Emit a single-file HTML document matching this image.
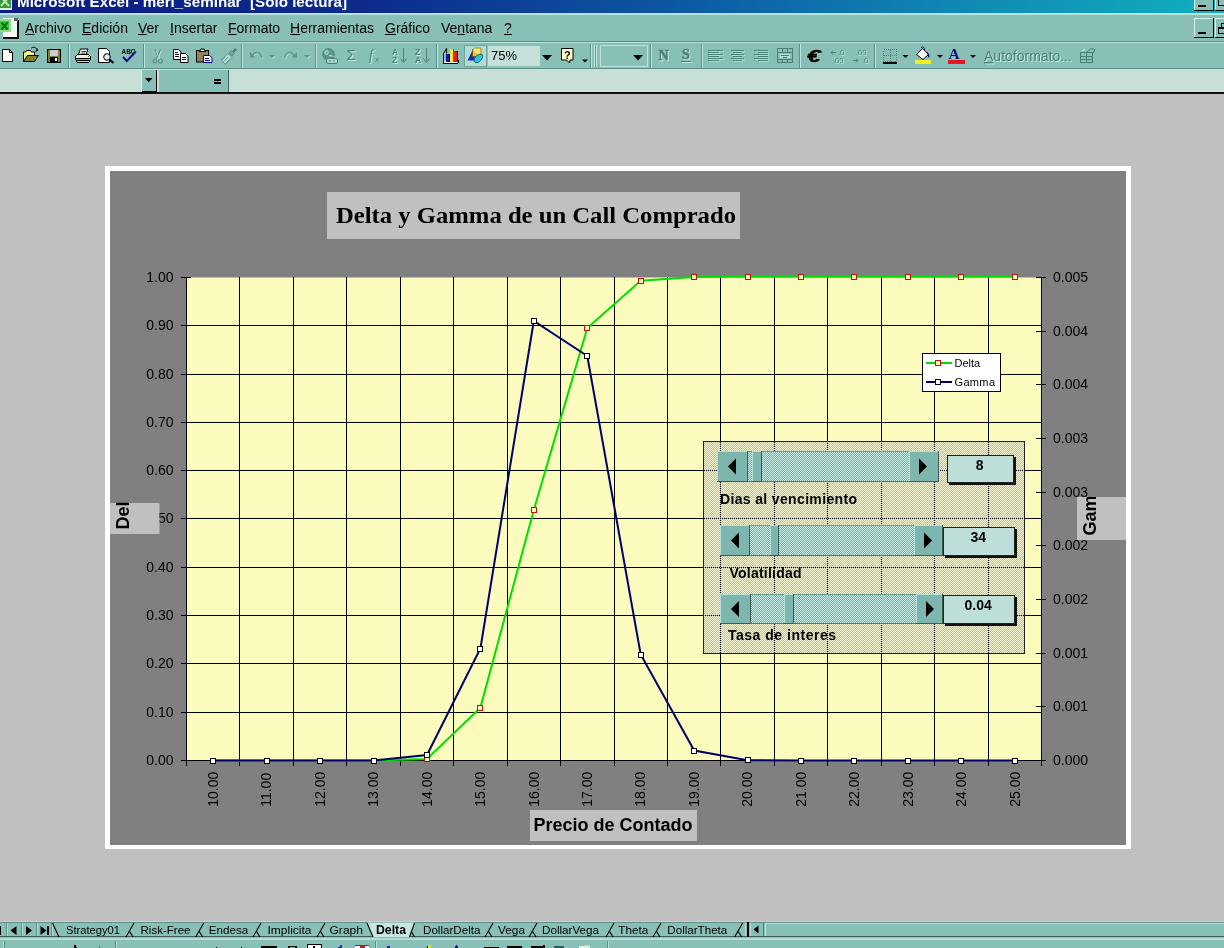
<!DOCTYPE html>
<html lang="es"><head><meta charset="utf-8"><title>Microsoft Excel - merl_seminar [Sólo lectura]</title>
<style>
html,body{margin:0;padding:0}
body{width:1224px;height:948px;overflow:hidden;position:relative;background:#C0C0C0;font-family:"Liberation Sans",sans-serif;color:#000}
.abs{position:absolute}
svg,.menu{will-change:transform}
#titlebar{left:0;top:0;width:1224px;height:13px;background:linear-gradient(to right,#0c1c84 0%,#0c2c8c 30%,#0c58a4 55%,#1088b4 78%,#10b0c0 100%);overflow:hidden}
#titletext{left:17px;top:-11px;font-size:16px;font-weight:bold;color:#fff;white-space:nowrap;letter-spacing:0.55px}
#menubar{left:0;top:13px;width:1224px;height:29px;background:#88C0B8;border-top:2px solid #B8E4DC;box-sizing:border-box;border-bottom:1px solid #5E9088}
.menu{position:absolute;top:20px;font-size:14px;line-height:16px;white-space:nowrap;color:#000}
.menu u{text-decoration:underline;text-underline-offset:1px}
#toolbar{left:0;top:42px;width:1224px;height:27px;background:#88C0B8;border-top:1px solid #B8E4DC;border-bottom:1px solid #5E9088;box-sizing:border-box}
#formulabar{left:0;top:69px;width:1224px;height:23px;background:#C8DFD7}
#fline{left:0;top:92px;width:1224px;height:2px;background:#101010}
.sep{position:absolute;top:45px;width:2px;height:22px;border-left:1px solid #5E9088;border-right:1px solid #B8E4DC;box-sizing:border-box}
.tab{position:absolute;top:923px;font-size:11.5px;line-height:14px;white-space:nowrap}
</style></head><body>

<div id="titlebar" class="abs"></div>
<div id="menubar" class="abs"></div>
<div class="menu" style="left:25px"><u>A</u>rchivo</div>
<div class="menu" style="left:82px"><u>E</u>dición</div>
<div class="menu" style="left:138px"><u>V</u>er</div>
<div class="menu" style="left:170px"><u>I</u>nsertar</div>
<div class="menu" style="left:228px"><u>F</u>ormato</div>
<div class="menu" style="left:290px"><u>H</u>erramientas</div>
<div class="menu" style="left:385px"><u>G</u>ráfico</div>
<div class="menu" style="left:441px">Ve<u>n</u>tana</div>
<div class="menu" style="left:504px"><u>?</u></div>
<div id="toolbar" class="abs"></div>
<div id="formulabar" class="abs"></div>
<div id="fline" class="abs"></div>
<svg class="abs" style="left:0;top:0" width="1224" height="94" viewBox="0 0 1224 94" font-family="Liberation Sans, sans-serif">
<text x="17" y="6.500" font-size="15.200" font-weight="bold" fill="#fff" xml:space="preserve">Microsoft Excel - merl_seminar  [Sólo lectura]</text>
<g shape-rendering="crispEdges">
<rect x="68" y="44" width="1" height="24" fill="#5E9088"/><rect x="69" y="44" width="1" height="24" fill="#BCE6DE"/>
<rect x="143" y="44" width="1" height="24" fill="#5E9088"/><rect x="144" y="44" width="1" height="24" fill="#BCE6DE"/>
<rect x="241" y="44" width="1" height="24" fill="#5E9088"/><rect x="242" y="44" width="1" height="24" fill="#BCE6DE"/>
<rect x="315" y="44" width="1" height="24" fill="#5E9088"/><rect x="316" y="44" width="1" height="24" fill="#BCE6DE"/>
<rect x="436" y="44" width="1" height="24" fill="#5E9088"/><rect x="437" y="44" width="1" height="24" fill="#BCE6DE"/>
<rect x="590" y="44" width="1" height="24" fill="#5E9088"/><rect x="591" y="44" width="1" height="24" fill="#BCE6DE"/>
<rect x="650" y="44" width="1" height="24" fill="#5E9088"/><rect x="651" y="44" width="1" height="24" fill="#BCE6DE"/>
<rect x="701" y="44" width="1" height="24" fill="#5E9088"/><rect x="702" y="44" width="1" height="24" fill="#BCE6DE"/>
<rect x="799" y="44" width="1" height="24" fill="#5E9088"/><rect x="800" y="44" width="1" height="24" fill="#BCE6DE"/>
<rect x="874" y="44" width="1" height="24" fill="#5E9088"/><rect x="875" y="44" width="1" height="24" fill="#BCE6DE"/>
<rect x="594" y="45" width="1" height="22" fill="#BCE6DE"/><rect x="595" y="46" width="1" height="21" fill="#6A9C94"/>
<rect x="596" y="45" width="1" height="22" fill="#BCE6DE"/>
</g>
<g shape-rendering="crispEdges"><rect x="3" y="18" width="15" height="20" fill="#F4F8F4"/><rect x="17" y="20" width="2" height="19" fill="#101010"/><rect x="3" y="37" width="16" height="2" fill="#101010"/><rect x="14" y="18" width="4" height="3" fill="#606060"/><rect x="0" y="19" width="11" height="13" fill="#8CE08C"/><rect x="0" y="21" width="9" height="9" fill="#48C048"/></g>
<path d="M1.500 22.500l6 7M7.500 22.500l-6 7" stroke="#0A7A14" stroke-width="2.400" fill="none"/>
<g shape-rendering="crispEdges"><rect x="0" y="0" width="12" height="10" fill="#D8F0D8"/><rect x="0" y="0" width="11" height="8" fill="#3C983C"/></g><path d="M1 -3l8 9M9 -3l-8 9" stroke="#B8E8B0" stroke-width="2" fill="none"/>
<path d="M2.5 49.5h7l3 3v9h-10z" fill="#fff" stroke="#000"/><path d="M9.5 49.5v3h3" fill="none" stroke="#000"/>
<path d="M23.5 61.5v-9.5h2l1-1.5h4l1 1.5h3v3" fill="#F4F48C" stroke="#000"/><path d="M23.5 61.5l4-6h11l-4 6z" fill="#808028" stroke="#000"/><path d="M31 48.5c2-2 5-1.5 6 1" fill="none" stroke="#000"/><path d="M35 51.5l3-.5-.5-3z" fill="#000"/>
<g shape-rendering="crispEdges"><rect x="47" y="49" width="14" height="14" fill="#808028"/><rect x="47.5" y="49.5" width="13" height="13" fill="none" stroke="#000"/><rect x="50" y="50" width="8" height="6" fill="#D0C8D8"/><rect x="50" y="57" width="8" height="5" fill="#000"/><rect x="55" y="58" width="2" height="3" fill="#fff"/></g>
<path d="M78.500 54.500l2-5.500h7.500l-2 5.500z" fill="#fff" stroke="#000"/><path d="M81.500 51.500h4.500M80.800 53.200h4.500" stroke="#000" stroke-width=".8" fill="none"/><g shape-rendering="crispEdges"><rect x="76" y="55" width="14" height="5" fill="#F0F0E0"/><rect x="75" y="56" width="16" height="4" fill="#F0F0E0"/><rect x="77" y="54" width="12" height="1" fill="#000"/><rect x="75" y="56" width="1" height="4" fill="#000"/><rect x="90" y="56" width="1" height="4" fill="#000"/><rect x="76" y="55" width="1" height="1" fill="#000"/><rect x="89" y="55" width="1" height="1" fill="#000"/><rect x="76" y="58" width="14" height="1" fill="#000"/><rect x="76" y="60" width="14" height="1" fill="#000"/><rect x="77" y="61" width="12" height="1" fill="#D8D8C0"/><rect x="77" y="62" width="12" height="1" fill="#000"/><rect x="76" y="61" width="1" height="1" fill="#000"/><rect x="89" y="61" width="1" height="1" fill="#000"/><rect x="76" y="59" width="14" height="1" fill="#A8A890"/><rect x="88" y="56" width="1" height="1" fill="#808000"/></g>
<path d="M98.500 48.500h8l3 3v11h-11z" fill="#fff" stroke="#000"/><circle cx="107" cy="57" r="3.300" fill="#D8F0F0" stroke="#000"/><path d="M109.500 59.500l4 3.500" stroke="#000" stroke-width="2" fill="none"/>
<text x="121.500" y="54" font-size="7.5" font-weight="bold" textLength="14" lengthAdjust="spacingAndGlyphs">ABC</text>
<path d="M123 57l3.800 4 9-9.500" fill="none" stroke="#101080" stroke-width="1.900"/>
<g fill="none" stroke="#4A8078" stroke-width="1"><path d="M155 49.500l4 9M160.500 49.500l-4 9"/><circle cx="155" cy="61" r="2"/><circle cx="160.500" cy="61" r="2"/></g>
<g fill="none" stroke="#C4ECE4" stroke-width="1" opacity=".8"><path d="M156 50.500l4 9M161.500 50.500l-4 9"/></g>
<g><path d="M173.500 49.500h5l2.500 2.500v7.500h-7.500z" fill="#fff" stroke="#000"/><path d="M180.500 53.500h5l2.500 2.500v6.500h-7.500z" fill="#fff" stroke="#000"/><path d="M175 52.500h3M175 54.500h4M175 56.500h4M182 57.500h4M182 59.500h4" stroke="#101030" fill="none"/></g>
<g><rect x="196.500" y="50.500" width="12" height="11.500" fill="#8C8460" stroke="#000"/><path d="M199.500 51.500l1.500-2.500h3l1.500 2.500z" fill="#F0E8B0" stroke="#000"/><path d="M203.500 55.500h6l2.500 2v5h-8.500z" fill="#fff" stroke="#000080"/><path d="M205 58.500h4M205 60.500h5" stroke="#000080" fill="none"/></g>
<path d="M221 60l7-6.500 4 4-6.500 7z" fill="#B0DCD4" stroke="#5A968C" stroke-width=".9"/><path d="M223 62l5-5M225 64l5-5M221.500 60.500l4-4" stroke="#5A968C" stroke-width=".8" fill="none"/><path d="M229 53l2.500-2.500 3 3-2.500 2.500z" fill="#78ACA4" stroke="#4A8078" stroke-width=".8"/><path d="M232.500 51l2.500-3 2 2-3 2.500z" fill="#4A8078"/>
<g fill="none" stroke="#C4ECE4" stroke-width="1.300" opacity=".7"><path d="M253 57c3-5 8-5 10 1.500"/><path d="M285.500 58.500c2-6.500 7-6.500 10-1.500"/></g>
<g fill="none" stroke="#5A968C" stroke-width="1.500"><path d="M252 56c3-5 8-5 10 1.500"/><path d="M284.500 57.500c2-6.500 7-6.500 10-1.500"/></g>
<path d="M250 52v5.500h5.500z" fill="#5A968C"/><path d="M297 52v5.500h-5.500z" fill="#5A968C"/>
<path d="M270 56h6l-3 3z" fill="#C4ECE4" opacity=".7"/><path d="M305 56h6l-3 3z" fill="#C4ECE4" opacity=".7"/>
<path d="M269 55h6l-3 3z" fill="#5A968C"/><path d="M304 55h6l-3 3z" fill="#5A968C"/>
<circle cx="328.500" cy="54.500" r="5.800" fill="#5A968C" stroke="#4A8078" stroke-width="1"/><path d="M325 52c2-2 4-1 3 1s-3 2-3-1zM329 56c2-1 4 0 4 1" stroke="#C4ECE4" stroke-width="1.300" fill="none" opacity=".8"/><rect x="326.500" y="58.500" width="11" height="5" rx="1.500" fill="#A8D8D0" stroke="#4A8078"/><path d="M329 61h2M333 61h2" stroke="#4A8078"/>
<text x="347.500" y="61" font-size="15" fill="#C4ECE4">Σ</text><text x="346.500" y="60" font-size="15" fill="#4A8078">Σ</text>
<text x="370" y="61" font-size="14" font-style="italic" font-family="Liberation Serif, serif" fill="#C4ECE4">f</text><text x="369" y="60" font-size="14" font-style="italic" font-family="Liberation Serif, serif" fill="#4A8078">f</text>
<text x="375" y="62" font-size="8" font-style="italic" fill="#4A8078">x</text>
<text x="393" y="56" font-size="8.500" font-weight="bold" fill="#C4ECE4">A</text><text x="393" y="64" font-size="8.500" font-weight="bold" fill="#C4ECE4">Z</text>
<text x="392" y="55" font-size="8.500" font-weight="bold" fill="#4A8078">A</text><text x="392" y="63" font-size="8.500" font-weight="bold" fill="#4A8078">Z</text>
<path d="M403.5 48v14M400.5 58.500l3 4 3-4" fill="none" stroke="#4A8078"/>
<text x="416" y="56" font-size="8.500" font-weight="bold" fill="#C4ECE4">Z</text><text x="416" y="64" font-size="8.500" font-weight="bold" fill="#C4ECE4">A</text>
<text x="415" y="55" font-size="8.500" font-weight="bold" fill="#4A8078">Z</text><text x="415" y="63" font-size="8.500" font-weight="bold" fill="#4A8078">A</text>
<path d="M426.5 48v14M423.5 58.500l3 4 3-4" fill="none" stroke="#4A8078"/>
<g shape-rendering="crispEdges"><rect x="444" y="61" width="14" height="2" fill="#fff"/><rect x="443" y="63" width="15" height="1" fill="#000"/><rect x="443" y="53" width="1" height="10" fill="#000"/><rect x="446" y="54" width="4" height="8" fill="#1414B4"/><rect x="450" y="49" width="4" height="13" fill="#F4EC20"/><rect x="454" y="51" width="4" height="11" fill="#E41C1C"/><rect x="449" y="54" width="1" height="8" fill="#000040"/><rect x="453" y="49" width="1" height="13" fill="#606000"/><rect x="457" y="51" width="1" height="11" fill="#600000"/><rect x="458" y="60" width="1" height="3" fill="#000"/></g><path d="M443.500 53.500l3-5v5" fill="none" stroke="#000"/>
<rect x="464" y="45" width="23" height="22" fill="#B4DCD6"/><rect x="464.500" y="45.500" width="22" height="21" fill="none" stroke="#70A49C"/>
<path d="M467.500 60.500l5-10 3 10z" fill="#1828C0"/><path d="M472.500 49.500h7v7h-7z" fill="#E8C830" stroke="#705010" stroke-width=".8"/><path d="M473 49.500l1.500-1.500h6.500v7l-1.500 1.500" fill="#F8E870" stroke="#705010" stroke-width=".6"/><path d="M474 60c0-3 5-7 8-5.500 2 1.500 0 6-4 8-2 1-4 0-4-2.500z" fill="#20C8E0" stroke="#103848" stroke-width=".8"/>
<g shape-rendering="crispEdges"><rect x="488" y="46" width="52" height="20" fill="#C4E0D8"/><rect x="540" y="46" width="14" height="20" fill="#88C0B8"/></g>
<text x="491" y="59.600" font-size="13">75%</text><path d="M542 55h10l-5 5.500z" fill="#000"/>
<path d="M561.500 48.500h11.500v11.500h-3l-.5 3-3-3h-5z" fill="#FFFFC8" stroke="#000"/><text x="564" y="58.500" font-size="11" font-weight="bold">?</text>
<path d="M582 59.500h6l-3 3z" fill="#000"/>
<rect x="600.500" y="45.500" width="47" height="21" fill="none" stroke="#B8E4DC"/><path d="M633 55h10l-5 5.500z" fill="#000"/>
<text x="659.500" y="61" font-size="14" font-weight="bold" font-family="Liberation Serif, serif" fill="#C4ECE4" stroke="#C4ECE4" stroke-width=".4">N</text><text x="658.500" y="60" font-size="14" font-weight="bold" font-family="Liberation Serif, serif" fill="#4A8078" stroke="#4A8078" stroke-width=".5">N</text>
<text x="683" y="60" font-size="14" font-weight="bold" font-family="Liberation Serif, serif" fill="#C4ECE4" stroke="#C4ECE4" stroke-width=".4">S</text><text x="682" y="59" font-size="14" font-weight="bold" font-family="Liberation Serif, serif" fill="#4A8078" stroke="#4A8078" stroke-width=".5">S</text><rect x="681" y="61" width="10" height="1" fill="#4A8078"/><rect x="682" y="62" width="10" height="1" fill="#C4ECE4"/>
<g shape-rendering="crispEdges">
<rect x="708" y="50" width="15" height="1" fill="#4A8078"/>
<rect x="709" y="51" width="15" height="1" fill="#C4ECE4" opacity=".6"/>
<rect x="708" y="52" width="11" height="1" fill="#4A8078"/>
<rect x="709" y="53" width="11" height="1" fill="#C4ECE4" opacity=".6"/>
<rect x="708" y="54" width="15" height="1" fill="#4A8078"/>
<rect x="709" y="55" width="15" height="1" fill="#C4ECE4" opacity=".6"/>
<rect x="708" y="56" width="11" height="1" fill="#4A8078"/>
<rect x="709" y="57" width="11" height="1" fill="#C4ECE4" opacity=".6"/>
<rect x="708" y="58" width="15" height="1" fill="#4A8078"/>
<rect x="709" y="59" width="15" height="1" fill="#C4ECE4" opacity=".6"/>
<rect x="708" y="60" width="11" height="1" fill="#4A8078"/>
<rect x="709" y="61" width="11" height="1" fill="#C4ECE4" opacity=".6"/>
<rect x="731" y="50" width="13" height="1" fill="#4A8078"/>
<rect x="732" y="51" width="13" height="1" fill="#C4ECE4" opacity=".6"/>
<rect x="733" y="52" width="9" height="1" fill="#4A8078"/>
<rect x="734" y="53" width="9" height="1" fill="#C4ECE4" opacity=".6"/>
<rect x="731" y="54" width="13" height="1" fill="#4A8078"/>
<rect x="732" y="55" width="13" height="1" fill="#C4ECE4" opacity=".6"/>
<rect x="733" y="56" width="9" height="1" fill="#4A8078"/>
<rect x="734" y="57" width="9" height="1" fill="#C4ECE4" opacity=".6"/>
<rect x="731" y="58" width="13" height="1" fill="#4A8078"/>
<rect x="732" y="59" width="13" height="1" fill="#C4ECE4" opacity=".6"/>
<rect x="733" y="60" width="9" height="1" fill="#4A8078"/>
<rect x="734" y="61" width="9" height="1" fill="#C4ECE4" opacity=".6"/>
<rect x="754" y="50" width="14" height="1" fill="#4A8078"/>
<rect x="755" y="51" width="14" height="1" fill="#C4ECE4" opacity=".6"/>
<rect x="758" y="52" width="10" height="1" fill="#4A8078"/>
<rect x="759" y="53" width="10" height="1" fill="#C4ECE4" opacity=".6"/>
<rect x="754" y="54" width="14" height="1" fill="#4A8078"/>
<rect x="755" y="55" width="14" height="1" fill="#C4ECE4" opacity=".6"/>
<rect x="758" y="56" width="10" height="1" fill="#4A8078"/>
<rect x="759" y="57" width="10" height="1" fill="#C4ECE4" opacity=".6"/>
<rect x="754" y="58" width="14" height="1" fill="#4A8078"/>
<rect x="755" y="59" width="14" height="1" fill="#C4ECE4" opacity=".6"/>
<rect x="758" y="60" width="10" height="1" fill="#4A8078"/>
<rect x="759" y="61" width="10" height="1" fill="#C4ECE4" opacity=".6"/>
<rect x="777.500" y="48.500" width="15" height="14" fill="none" stroke="#4A8078"/>
<rect x="778" y="52" width="15" height="1" fill="#4A8078"/>
<rect x="778" y="59" width="15" height="1" fill="#4A8078"/>
<rect x="782" y="49" width="1" height="3" fill="#4A8078"/><rect x="782" y="60" width="1" height="3" fill="#4A8078"/>
<rect x="787" y="49" width="1" height="3" fill="#4A8078"/><rect x="787" y="60" width="1" height="3" fill="#4A8078"/>
<rect x="780" y="54" width="10" height="4" fill="#C4ECE4" opacity=".7"/><rect x="781" y="55" width="8" height="1" fill="#4A8078"/><rect x="783" y="57" width="4" height="1" fill="#4A8078"/>
</g>
<text x="807" y="61.500" font-size="16" font-weight="bold" font-style="italic" textLength="13.500" lengthAdjust="spacingAndGlyphs" stroke="#000" stroke-width=".5">€</text>
<g font-size="7.500" fill="#4A8078"><text x="838" y="55">.0</text><text x="833" y="63">.00</text><text x="856" y="55">.00</text><text x="862" y="63">.0</text></g>
<g font-size="7.500" fill="#C4ECE4" opacity=".7"><text x="839" y="56">.0</text><text x="834" y="64">.00</text><text x="857" y="56">.00</text><text x="863" y="64">.0</text></g>
<path d="M836 52.500h-5m2-2l-2 2 2 2M853 60.500h5m-2-2l2 2-2 2" fill="none" stroke="#4A8078"/>
<g shape-rendering="crispEdges"><rect x="883.500" y="49.500" width="13" height="12" fill="none" stroke="#4A8078" stroke-dasharray="1 1"/><path d="M890 49.500v12M884 55.500h13" stroke="#4A8078" stroke-dasharray="1 1" fill="none"/><rect x="883" y="62" width="14" height="1.500" fill="#000"/></g>
<path d="M902.5 55h6l-3 3z" fill="#000"/>
<path d="M937 55h6l-3 3z" fill="#000"/>
<path d="M970 55h6l-3 3z" fill="#000"/>
<g><path d="M916.500 54.500l6-6 6 6-5.500 5z" fill="#fff" stroke="#000"/><path d="M921 48c1-2 4-1 3.500 2" fill="none" stroke="#000080"/><path d="M927 52c2 1 3 4 2 6-1-1-2-3-2-6z" fill="#101090"/><rect x="915" y="59.500" width="16" height="4.500" fill="#F4F020" shape-rendering="crispEdges"/></g>
<text x="948.500" y="58.500" font-size="15.500" font-weight="bold" font-family="Liberation Serif, serif" fill="#101080">A</text><rect x="948" y="59.500" width="17" height="4.500" fill="#E81818" shape-rendering="crispEdges"/>
<text x="985" y="62" font-size="14" fill="#C4ECE4"><tspan text-decoration="underline">A</tspan>utoformato...</text><text x="984" y="61" font-size="14" fill="#4A8078"><tspan text-decoration="underline">A</tspan>utoformato...</text>
<g shape-rendering="crispEdges"><rect x="1080.500" y="52.500" width="12" height="10" fill="none" stroke="#4A8078"/><path d="M1081 56.500h12M1081 59.500h12M1086.500 53v10" stroke="#4A8078" fill="none"/></g><path d="M1087 52l4-3.500 4 1-2 4" fill="none" stroke="#4A8078"/><path d="M1082 51l3-2" stroke="#C4ECE4"/>
<g shape-rendering="crispEdges">
<rect x="142" y="70" width="15" height="22" fill="#88C0B8"/><rect x="156" y="70" width="1" height="22" fill="#000"/><rect x="142" y="91" width="15" height="1" fill="#000"/><rect x="141" y="70" width="1" height="22" fill="#D8F4EE"/>
<rect x="159" y="70" width="69" height="22" fill="#88C0B8"/><rect x="228" y="70" width="1" height="22" fill="#406860"/>
<rect x="214" y="79" width="7" height="2" fill="#000"/><rect x="214" y="82" width="7" height="2" fill="#000"/>
</g>
<path d="M145 78h7.500l-3.750 4.200z" fill="#000"/>
<g shape-rendering="crispEdges">
<rect x="1194" y="-8" width="20" height="19" fill="#88C0B8"/><rect x="1194" y="-8" width="20" height="1" fill="#D8F4EE"/><rect x="1194" y="-8" width="1" height="19" fill="#D8F4EE"/><rect x="1213" y="-8" width="1" height="19" fill="#000"/><rect x="1194" y="10" width="20" height="1" fill="#000"/>
<rect x="1215" y="-8" width="20" height="19" fill="#88C0B8"/><rect x="1215" y="-8" width="20" height="1" fill="#D8F4EE"/><rect x="1215" y="-8" width="1" height="19" fill="#D8F4EE"/><rect x="1234" y="-8" width="1" height="19" fill="#000"/><rect x="1215" y="10" width="20" height="1" fill="#000"/>
<rect x="1194" y="18" width="20" height="20" fill="#88C0B8"/><rect x="1194" y="18" width="20" height="1" fill="#D8F4EE"/><rect x="1194" y="18" width="1" height="20" fill="#D8F4EE"/><rect x="1213" y="18" width="1" height="20" fill="#000"/><rect x="1194" y="37" width="20" height="1" fill="#000"/>
<rect x="1215" y="18" width="20" height="20" fill="#88C0B8"/><rect x="1215" y="18" width="20" height="1" fill="#D8F4EE"/><rect x="1215" y="18" width="1" height="20" fill="#D8F4EE"/><rect x="1234" y="18" width="1" height="20" fill="#000"/><rect x="1215" y="37" width="20" height="1" fill="#000"/>
<rect x="1198" y="5" width="8" height="2" fill="#000"/><rect x="1198" y="32" width="8" height="2" fill="#000"/>
<rect x="1218.500" y="-4.500" width="9" height="10" fill="none" stroke="#000"/><rect x="1218" y="-5" width="10" height="2" fill="#000"/>
<rect x="1218.500" y="27.500" width="9" height="6" fill="none" stroke="#000"/><rect x="1218" y="27" width="10" height="2" fill="#000"/><rect x="1221.500" y="23.500" width="9" height="4" fill="none" stroke="#000"/>
</g>
</svg>
<svg class="abs" style="left:0;top:0" width="1224" height="948" viewBox="0 0 1224 948" font-family="Liberation Sans, sans-serif">
<defs>
<pattern id="dg" width="2" height="2" patternUnits="userSpaceOnUse"><rect width="2" height="2" fill="#F8F8D4"/><rect x="1" y="0" width="1" height="1" fill="#BCBEA2"/><rect x="0" y="1" width="1" height="1" fill="#BCBEA2"/></pattern>
<pattern id="dt" width="2" height="2" patternUnits="userSpaceOnUse"><rect width="2" height="2" fill="#78ACA4"/><rect x="0" y="0" width="1" height="1" fill="#C8F0E8"/><rect x="1" y="1" width="1" height="1" fill="#C8F0E8"/></pattern>
</defs>
<rect x="105" y="166" width="1026" height="683" fill="#fff"/>
<rect x="110" y="171" width="1016" height="674" fill="#808080"/>
<rect x="327" y="192" width="413" height="47" fill="#C0C0C0"/>
<text x="336" y="222.6" font-family="Liberation Serif, serif" font-weight="bold" font-size="24" textLength="400" lengthAdjust="spacingAndGlyphs">Delta y Gamma de un Call Comprado</text>
<rect x="186" y="277.5" width="855" height="482.5" fill="#FBFBBE"/>
<g stroke="#000" stroke-width="1" shape-rendering="crispEdges"><line x1="186.5" y1="277" x2="186.5" y2="766"/><line x1="239.5" y1="277" x2="239.5" y2="766"/><line x1="293.5" y1="277" x2="293.5" y2="766"/><line x1="346.5" y1="277" x2="346.5" y2="766"/><line x1="400.5" y1="277" x2="400.5" y2="766"/><line x1="453.5" y1="277" x2="453.5" y2="766"/><line x1="507.5" y1="277" x2="507.5" y2="766"/><line x1="560.5" y1="277" x2="560.5" y2="766"/><line x1="614.5" y1="277" x2="614.5" y2="766"/><line x1="667.5" y1="277" x2="667.5" y2="766"/><line x1="720.5" y1="277" x2="720.5" y2="766"/><line x1="774.5" y1="277" x2="774.5" y2="766"/><line x1="827.5" y1="277" x2="827.5" y2="766"/><line x1="881.5" y1="277" x2="881.5" y2="766"/><line x1="934.5" y1="277" x2="934.5" y2="766"/><line x1="988.5" y1="277" x2="988.5" y2="766"/><line x1="1041.5" y1="277" x2="1041.5" y2="766"/><line x1="181" y1="277.5" x2="191" y2="277.5"/><line x1="181" y1="325.5" x2="1042" y2="325.5"/><line x1="181" y1="374.5" x2="1042" y2="374.5"/><line x1="181" y1="422.5" x2="1042" y2="422.5"/><line x1="181" y1="470.5" x2="1042" y2="470.5"/><line x1="181" y1="518.5" x2="1042" y2="518.5"/><line x1="181" y1="567.5" x2="1042" y2="567.5"/><line x1="181" y1="615.5" x2="1042" y2="615.5"/><line x1="181" y1="663.5" x2="1042" y2="663.5"/><line x1="181" y1="712.5" x2="1042" y2="712.5"/><line x1="181" y1="760.5" x2="1042" y2="760.5"/><line x1="1036" y1="277.5" x2="1046" y2="277.5"/><line x1="1036" y1="331.5" x2="1046" y2="331.5"/><line x1="1036" y1="384.5" x2="1046" y2="384.5"/><line x1="1036" y1="438.5" x2="1046" y2="438.5"/><line x1="1036" y1="492.5" x2="1046" y2="492.5"/><line x1="1036" y1="545.5" x2="1046" y2="545.5"/><line x1="1036" y1="599.5" x2="1046" y2="599.5"/><line x1="1036" y1="653.5" x2="1046" y2="653.5"/><line x1="1036" y1="706.5" x2="1046" y2="706.5"/><line x1="1036" y1="760.5" x2="1046" y2="760.5"/></g>
<g font-size="14" fill="#000"><text x="173.5" y="282.1" text-anchor="end">1.00</text><text x="173.5" y="330.1" text-anchor="end">0.90</text><text x="173.5" y="379.1" text-anchor="end">0.80</text><text x="173.5" y="427.1" text-anchor="end">0.70</text><text x="173.5" y="475.1" text-anchor="end">0.60</text><text x="173.5" y="523.1" text-anchor="end">0.50</text><text x="173.5" y="572.1" text-anchor="end">0.40</text><text x="173.5" y="620.1" text-anchor="end">0.30</text><text x="173.5" y="668.1" text-anchor="end">0.20</text><text x="173.5" y="717.1" text-anchor="end">0.10</text><text x="173.5" y="765.1" text-anchor="end">0.00</text><text x="1053" y="282.1">0.005</text><text x="1053" y="336.1">0.004</text><text x="1053" y="389.1">0.004</text><text x="1053" y="443.1">0.003</text><text x="1053" y="497.1">0.003</text><text x="1053" y="550.1">0.002</text><text x="1053" y="604.1">0.002</text><text x="1053" y="658.1">0.001</text><text x="1053" y="711.1">0.001</text><text x="1053" y="765.1">0.000</text><text transform="translate(217.9,806.8) rotate(-90)">10.00</text><text transform="translate(271.4,806.8) rotate(-90)">11.00</text><text transform="translate(324.8,806.8) rotate(-90)">12.00</text><text transform="translate(378.2,806.8) rotate(-90)">13.00</text><text transform="translate(431.7,806.8) rotate(-90)">14.00</text><text transform="translate(485.1,806.8) rotate(-90)">15.00</text><text transform="translate(538.5,806.8) rotate(-90)">16.00</text><text transform="translate(592.0,806.8) rotate(-90)">17.00</text><text transform="translate(645.4,806.8) rotate(-90)">18.00</text><text transform="translate(698.9,806.8) rotate(-90)">19.00</text><text transform="translate(752.3,806.8) rotate(-90)">20.00</text><text transform="translate(805.7,806.8) rotate(-90)">21.00</text><text transform="translate(859.2,806.8) rotate(-90)">22.00</text><text transform="translate(912.6,806.8) rotate(-90)">23.00</text><text transform="translate(966.0,806.8) rotate(-90)">24.00</text><text transform="translate(1019.5,806.8) rotate(-90)">25.00</text></g>
<polyline fill="none" stroke="#00E000" stroke-width="2" points="213.2,760.5 266.7,760.5 320.1,760.5 373.5,760.5 427.0,759 480.4,707.6 533.8,510 587.3,328 640.7,280.7 694.2,276.9 747.6,276.5 801.0,276.5 854.5,276.5 907.9,276.5 961.3,276.5 1014.8,276.5"/>
<g fill="#FBFBBE" stroke="#C01010" stroke-width="1"><rect x="210.0" y="758.0" width="5" height="5" transform="translate(0.5,0.5)"/><rect x="264.0" y="758.0" width="5" height="5" transform="translate(0.5,0.5)"/><rect x="317.0" y="758.0" width="5" height="5" transform="translate(0.5,0.5)"/><rect x="371.0" y="758.0" width="5" height="5" transform="translate(0.5,0.5)"/><rect x="424.0" y="756.0" width="5" height="5" transform="translate(0.5,0.5)"/><rect x="477.0" y="705.0" width="5" height="5" transform="translate(0.5,0.5)"/><rect x="531.0" y="507.0" width="5" height="5" transform="translate(0.5,0.5)"/><rect x="584.0" y="325.0" width="5" height="5" transform="translate(0.5,0.5)"/><rect x="638.0" y="278.0" width="5" height="5" transform="translate(0.5,0.5)"/><rect x="691.0" y="274.0" width="5" height="5" transform="translate(0.5,0.5)"/><rect x="745.0" y="274.0" width="5" height="5" transform="translate(0.5,0.5)"/><rect x="798.0" y="274.0" width="5" height="5" transform="translate(0.5,0.5)"/><rect x="851.0" y="274.0" width="5" height="5" transform="translate(0.5,0.5)"/><rect x="905.0" y="274.0" width="5" height="5" transform="translate(0.5,0.5)"/><rect x="958.0" y="274.0" width="5" height="5" transform="translate(0.5,0.5)"/><rect x="1012.0" y="274.0" width="5" height="5" transform="translate(0.5,0.5)"/></g>
<polyline fill="none" stroke="#000068" stroke-width="2" points="213.2,760.5 266.7,760.5 320.1,760.5 373.5,760.5 427.0,755 480.4,648.5 533.8,321 587.3,356 640.7,654.5 694.2,750.5 747.6,760.3 801.0,760.5 854.5,760.5 907.9,760.5 961.3,760.5 1014.8,760.5"/>
<g fill="#fff" stroke="#000" stroke-width="1"><rect x="210" y="758" width="5" height="5" transform="translate(0.5,0.5)"/><rect x="264" y="758" width="5" height="5" transform="translate(0.5,0.5)"/><rect x="317" y="758" width="5" height="5" transform="translate(0.5,0.5)"/><rect x="371" y="758" width="5" height="5" transform="translate(0.5,0.5)"/><rect x="424" y="752" width="5" height="5" transform="translate(0.5,0.5)"/><rect x="477" y="646" width="5" height="5" transform="translate(0.5,0.5)"/><rect x="531" y="318" width="5" height="5" transform="translate(0.5,0.5)"/><rect x="584" y="353" width="5" height="5" transform="translate(0.5,0.5)"/><rect x="638" y="652" width="5" height="5" transform="translate(0.5,0.5)"/><rect x="691" y="748" width="5" height="5" transform="translate(0.5,0.5)"/><rect x="745" y="757" width="5" height="5" transform="translate(0.5,0.5)"/><rect x="798" y="758" width="5" height="5" transform="translate(0.5,0.5)"/><rect x="851" y="758" width="5" height="5" transform="translate(0.5,0.5)"/><rect x="905" y="758" width="5" height="5" transform="translate(0.5,0.5)"/><rect x="958" y="758" width="5" height="5" transform="translate(0.5,0.5)"/><rect x="1012" y="758" width="5" height="5" transform="translate(0.5,0.5)"/></g>
<rect x="922.5" y="353.5" width="78" height="38" fill="#fff" stroke="#000" stroke-width="1"/>
<line x1="926" y1="363" x2="952" y2="363" stroke="#00E000" stroke-width="2"/><rect x="935.5" y="360.5" width="5" height="5" fill="#FBFBBE" stroke="#C01010"/>
<line x1="926" y1="382" x2="952" y2="382" stroke="#000068" stroke-width="2"/><rect x="935.5" y="379.5" width="5" height="5" fill="#fff" stroke="#000"/>
<text x="954.5" y="366.6" font-size="11">Delta</text><text x="954.5" y="385.6" font-size="11" textLength="40.5">Gamma</text>
<rect x="110" y="503" width="49.5" height="31" fill="#C0C0C0"/>
<text transform="translate(128.5,529.5) rotate(-90)" font-size="18" font-weight="bold">Del</text>
<rect x="1077" y="497" width="49" height="43" fill="#C0C0C0"/>
<clipPath id="cg"><rect x="1077" y="497" width="49" height="43"/></clipPath>
<g clip-path="url(#cg)"><text transform="translate(1095.5,535.5) rotate(-90)" font-size="18" font-weight="bold">Gamma</text></g>
<rect x="530" y="810" width="167" height="31" fill="#C0C0C0"/>
<text x="533.5" y="830.6" font-size="18" font-weight="bold">Precio de Contado</text>
<g shape-rendering="crispEdges">
<rect x="704" y="442" width="320" height="211" fill="url(#dg)"/>
<g stroke="#000" stroke-width="1" stroke-dasharray="1 1"><line x1="720.5" y1="442" x2="720.5" y2="653"/><line x1="774.5" y1="442" x2="774.5" y2="653"/><line x1="827.5" y1="443" x2="827.5" y2="653"/><line x1="881.5" y1="443" x2="881.5" y2="653"/><line x1="934.5" y1="442" x2="934.5" y2="653"/><line x1="988.5" y1="442" x2="988.5" y2="653"/><line x1="704" y1="470.5" x2="1024" y2="470.5"/><line x1="704" y1="518.5" x2="1024" y2="518.5"/><line x1="705" y1="567.5" x2="1024" y2="567.5"/><line x1="705" y1="615.5" x2="1024" y2="615.5"/></g>
<rect x="703.5" y="441.5" width="321" height="212" fill="none" stroke="#202020" stroke-width="1"/>
<rect x="717" y="451" width="222" height="31" fill="url(#dt)"/>
<rect x="717" y="451" width="222" height="1" fill="#6AA098"/>
<rect x="717" y="481" width="222" height="1" fill="#4C7C74"/>
<rect x="717" y="451" width="31" height="31" fill="#7CB6AE"/>
<rect x="717" y="451" width="31" height="1" fill="#B4DED8"/><rect x="717" y="451" width="1" height="31" fill="#B4DED8"/>
<rect x="717" y="481" width="31" height="1" fill="#3C5C58"/><rect x="747" y="451" width="1" height="31" fill="#3C5C58"/>
<rect x="752" y="451" width="10" height="31" fill="#7CB6AE"/>
<rect x="752" y="451" width="10" height="1" fill="#B4DED8"/><rect x="752" y="451" width="1" height="31" fill="#B4DED8"/>
<rect x="752" y="481" width="10" height="1" fill="#3C5C58"/><rect x="761" y="451" width="1" height="31" fill="#3C5C58"/>
<rect x="909" y="451" width="30" height="31" fill="#7CB6AE"/>
<rect x="909" y="451" width="30" height="1" fill="#B4DED8"/><rect x="909" y="451" width="1" height="31" fill="#B4DED8"/>
<rect x="909" y="481" width="30" height="1" fill="#3C5C58"/><rect x="938" y="451" width="1" height="31" fill="#3C5C58"/>
<polygon points="728,466.5 736,458.5 736,474.5" fill="#000" shape-rendering="auto"/>
<polygon points="927,466.5 919,458.5 919,474.5" fill="#000" shape-rendering="auto"/>
<rect x="949" y="457" width="67" height="28" fill="#101010"/>
<rect x="947" y="455" width="67" height="28" fill="#BEDEDA" stroke="none"/>
<rect x="947.5" y="455.5" width="66" height="27" fill="none" stroke="#202020"/>
<text x="979.7" y="469.5" text-anchor="middle" font-size="14" font-weight="bold" shape-rendering="auto">8</text>
<rect x="720" y="525" width="223" height="31" fill="url(#dt)"/>
<rect x="720" y="525" width="223" height="1" fill="#6AA098"/>
<rect x="720" y="555" width="223" height="1" fill="#4C7C74"/>
<rect x="720" y="525" width="30" height="31" fill="#7CB6AE"/>
<rect x="720" y="525" width="30" height="1" fill="#B4DED8"/><rect x="720" y="525" width="1" height="31" fill="#B4DED8"/>
<rect x="720" y="555" width="30" height="1" fill="#3C5C58"/><rect x="749" y="525" width="1" height="31" fill="#3C5C58"/>
<rect x="770" y="525" width="9" height="31" fill="#7CB6AE"/>
<rect x="770" y="525" width="9" height="1" fill="#B4DED8"/><rect x="770" y="525" width="1" height="31" fill="#B4DED8"/>
<rect x="770" y="555" width="9" height="1" fill="#3C5C58"/><rect x="778" y="525" width="1" height="31" fill="#3C5C58"/>
<rect x="914" y="525" width="29" height="31" fill="#7CB6AE"/>
<rect x="914" y="525" width="29" height="1" fill="#B4DED8"/><rect x="914" y="525" width="1" height="31" fill="#B4DED8"/>
<rect x="914" y="555" width="29" height="1" fill="#3C5C58"/><rect x="942" y="525" width="1" height="31" fill="#3C5C58"/>
<polygon points="731,540.5 739,532.5 739,548.5" fill="#000" shape-rendering="auto"/>
<polygon points="932,540.5 924,532.5 924,548.5" fill="#000" shape-rendering="auto"/>
<rect x="945" y="529" width="72" height="29" fill="#101010"/>
<rect x="943" y="527" width="72" height="29" fill="#BEDEDA" stroke="none"/>
<rect x="943.5" y="527.5" width="71" height="28" fill="none" stroke="#202020"/>
<text x="978.2" y="541.5" text-anchor="middle" font-size="14" font-weight="bold" shape-rendering="auto">34</text>
<rect x="720" y="594" width="223" height="30" fill="url(#dt)"/>
<rect x="720" y="594" width="223" height="1" fill="#6AA098"/>
<rect x="720" y="623" width="223" height="1" fill="#4C7C74"/>
<rect x="720" y="594" width="31" height="30" fill="#7CB6AE"/>
<rect x="720" y="594" width="31" height="1" fill="#B4DED8"/><rect x="720" y="594" width="1" height="30" fill="#B4DED8"/>
<rect x="720" y="623" width="31" height="1" fill="#3C5C58"/><rect x="750" y="594" width="1" height="30" fill="#3C5C58"/>
<rect x="784" y="594" width="10" height="30" fill="#7CB6AE"/>
<rect x="784" y="594" width="10" height="1" fill="#B4DED8"/><rect x="784" y="594" width="1" height="30" fill="#B4DED8"/>
<rect x="784" y="623" width="10" height="1" fill="#3C5C58"/><rect x="793" y="594" width="1" height="30" fill="#3C5C58"/>
<rect x="916" y="594" width="27" height="30" fill="#7CB6AE"/>
<rect x="916" y="594" width="27" height="1" fill="#B4DED8"/><rect x="916" y="594" width="1" height="30" fill="#B4DED8"/>
<rect x="916" y="623" width="27" height="1" fill="#3C5C58"/><rect x="942" y="594" width="1" height="30" fill="#3C5C58"/>
<polygon points="731,609.0 739,601.0 739,617.0" fill="#000" shape-rendering="auto"/>
<polygon points="934,609.0 926,601.0 926,617.0" fill="#000" shape-rendering="auto"/>
<rect x="945" y="597" width="72" height="29" fill="#101010"/>
<rect x="943" y="595" width="72" height="29" fill="#BEDEDA" stroke="none"/>
<rect x="943.5" y="595.5" width="71" height="28" fill="none" stroke="#202020"/>
<text x="978.2" y="609.5" text-anchor="middle" font-size="14" font-weight="bold" shape-rendering="auto">0.04</text>
</g>
<g font-size="14" font-weight="bold">
<text x="720" y="503.6" textLength="137" lengthAdjust="spacing">Dias al vencimiento</text>
<text x="729.5" y="578.2" textLength="72" lengthAdjust="spacing">Volatilidad</text>
<text x="728" y="639.8" textLength="108" lengthAdjust="spacing">Tasa de interes</text>
</g>
</svg>
<svg class="abs" style="left:0;top:918px" width="1224" height="30" viewBox="0 918 1224 30" font-family="Liberation Sans, sans-serif">
<g shape-rendering="crispEdges">
<rect x="0" y="921" width="1224" height="27" fill="#88C0B8"/>
<rect x="0" y="921" width="1224" height="1" fill="#B4DCD6"/>
<rect x="0" y="922" width="1224" height="1" fill="#5E9088"/>
<rect x="0" y="936" width="1224" height="1" fill="#3C5C58"/>
<rect x="0" y="937" width="1224" height="1" fill="#88C0B8"/>
<rect x="0" y="938" width="1224" height="2" fill="#B4DCD6"/>
<rect x="6" y="923" width="1" height="13" fill="#5E9088"/><rect x="7" y="923" width="1" height="13" fill="#B4DCD6"/>
<rect x="21" y="923" width="1" height="13" fill="#5E9088"/><rect x="22" y="923" width="1" height="13" fill="#B4DCD6"/>
<rect x="36" y="923" width="1" height="13" fill="#5E9088"/><rect x="37" y="923" width="1" height="13" fill="#B4DCD6"/>
<rect x="51" y="923" width="1" height="13" fill="#5E9088"/><rect x="52" y="923" width="1" height="13" fill="#B4DCD6"/>
<rect x="0" y="926" width="1" height="9" fill="#000"/>
<rect x="47" y="926" width="2" height="9" fill="#000"/>
</g>
<path d="M16.500 926v9l-6-4.500zM26 926v9l6-4.500zM40.500 926v9l6-4.500z" fill="#000"/>
<path d="M367 922.500h47.500l-4.700 14.500h-36.600z" fill="#C8E6E0"/>
<g fill="none" stroke="#000" stroke-width="1.100">
<path d="M52.500 923l6.500 14"/>
<path d="M126 937l8-14M129.3 931l3.700 6"/>
<path d="M195.7 937l8-14M199.0 931l3.700 6"/>
<path d="M253 937l8-14M256.3 931l3.700 6"/>
<path d="M317 937l8-14M320.3 931l3.700 6"/>
<path d="M485 937l8-14M488.3 931l3.700 6"/>
<path d="M529 937l8-14M532.3 931l3.700 6"/>
<path d="M606 937l8-14M609.3 931l3.700 6"/>
<path d="M653 937l8-14M656.3 931l3.700 6"/>
<path d="M734.6 937l8-14M737.9 931l3.700 6"/>
<path d="M367 923l6 14M414.500 923l-5 14M411 931l3.500 6"/>
</g>
<g font-size="11.500">
<text x="66" y="933.700" textLength="54" lengthAdjust="spacingAndGlyphs">Strategy01</text>
<text x="140.5" y="933.700" textLength="50" lengthAdjust="spacingAndGlyphs">Risk-Free</text>
<text x="208.7" y="933.700" textLength="39.5" lengthAdjust="spacingAndGlyphs">Endesa</text>
<text x="267.5" y="933.700" textLength="44" lengthAdjust="spacingAndGlyphs">Implicita</text>
<text x="329.5" y="933.700" textLength="33.5" lengthAdjust="spacingAndGlyphs">Graph</text>
<text x="423" y="933.700" textLength="57.5" lengthAdjust="spacingAndGlyphs">DollarDelta</text>
<text x="498" y="933.700" textLength="27" lengthAdjust="spacingAndGlyphs">Vega</text>
<text x="542" y="933.700" textLength="57" lengthAdjust="spacingAndGlyphs">DollarVega</text>
<text x="618.3" y="933.700" textLength="30" lengthAdjust="spacingAndGlyphs">Theta</text>
<text x="667.3" y="933.700" textLength="60" lengthAdjust="spacingAndGlyphs">DollarTheta</text>
</g>
<text x="376" y="933.700" font-size="12" font-weight="bold" textLength="30" lengthAdjust="spacingAndGlyphs">Delta</text>
<g shape-rendering="crispEdges"><rect x="745" y="923" width="1" height="13" fill="#B4DCD6"/><rect x="747" y="922" width="2" height="15" fill="#000"/><rect x="750" y="923" width="1" height="13" fill="#B4DCD6"/><rect x="763" y="923" width="1" height="13" fill="#4C7C74"/><rect x="765" y="923" width="1" height="13" fill="#C4ECE4"/><rect x="766" y="923" width="458" height="1" fill="#B4DCD6"/></g>
<path d="M758.500 925.500v8l-5-4z" fill="#000"/>
<g shape-rendering="crispEdges">
<rect x="3" y="941" width="1" height="7" fill="#B4DCD6"/><rect x="4" y="941" width="1" height="7" fill="#5E9088"/>
<rect x="115" y="941" width="1" height="7" fill="#5E9088"/><rect x="116" y="941" width="1" height="7" fill="#B4DCD6"/>
<rect x="375" y="941" width="1" height="7" fill="#5E9088"/><rect x="376" y="941" width="1" height="7" fill="#B4DCD6"/>
<rect x="607" y="941" width="1" height="7" fill="#5E9088"/><rect x="608" y="941" width="1" height="7" fill="#B4DCD6"/>
</g>
<g shape-rendering="crispEdges">
<rect x="74" y="945" width="2" height="3" fill="#000"/><rect x="76" y="947" width="1" height="1" fill="#000"/><rect x="99" y="946" width="1" height="2" fill="#406860"/>
<rect x="216" y="947" width="1" height="1" fill="#000"/><rect x="241" y="947" width="1" height="1" fill="#000"/>
<rect x="261" y="946" width="16" height="2" fill="#000"/>
<rect x="288" y="946" width="9" height="2" fill="#000"/><rect x="290" y="947" width="5" height="1" fill="#88C0B8"/>
<rect x="307" y="944" width="15" height="4" fill="#fff"/><rect x="307" y="944" width="15" height="1" fill="#000"/><rect x="307" y="944" width="1" height="4" fill="#000"/><rect x="321" y="944" width="1" height="4" fill="#000"/><rect x="313" y="946" width="2" height="2" fill="#000"/>
<rect x="340" y="945" width="2" height="3" fill="#1828C0"/><rect x="338" y="947" width="2" height="1" fill="#1828C0"/>
<rect x="355" y="945" width="14" height="3" fill="#fff"/><rect x="355" y="945" width="14" height="1" fill="#404040"/><rect x="360" y="946" width="5" height="2" fill="#C02020"/>
<rect x="387" y="946" width="3" height="2" fill="#1828C0"/>
<rect x="428" y="945" width="3" height="3" fill="#E8E020"/><rect x="427" y="946" width="1" height="2" fill="#000"/>
<rect x="456" y="945" width="1" height="1" fill="#101080"/><rect x="455" y="946" width="3" height="2" fill="#101080"/>
<rect x="484" y="947" width="15" height="1" fill="#000"/><rect x="507" y="946" width="15" height="2" fill="#000"/><rect x="531" y="946" width="14" height="2" fill="#000"/><rect x="543" y="945" width="2" height="1" fill="#000"/>
<rect x="554" y="946" width="10" height="2" fill="#2C5C58"/><rect x="579" y="946" width="11" height="2" fill="#E8E8E8"/><rect x="584" y="945" width="6" height="1" fill="#C0C0C0"/>
</g>
</svg>
</body></html>
